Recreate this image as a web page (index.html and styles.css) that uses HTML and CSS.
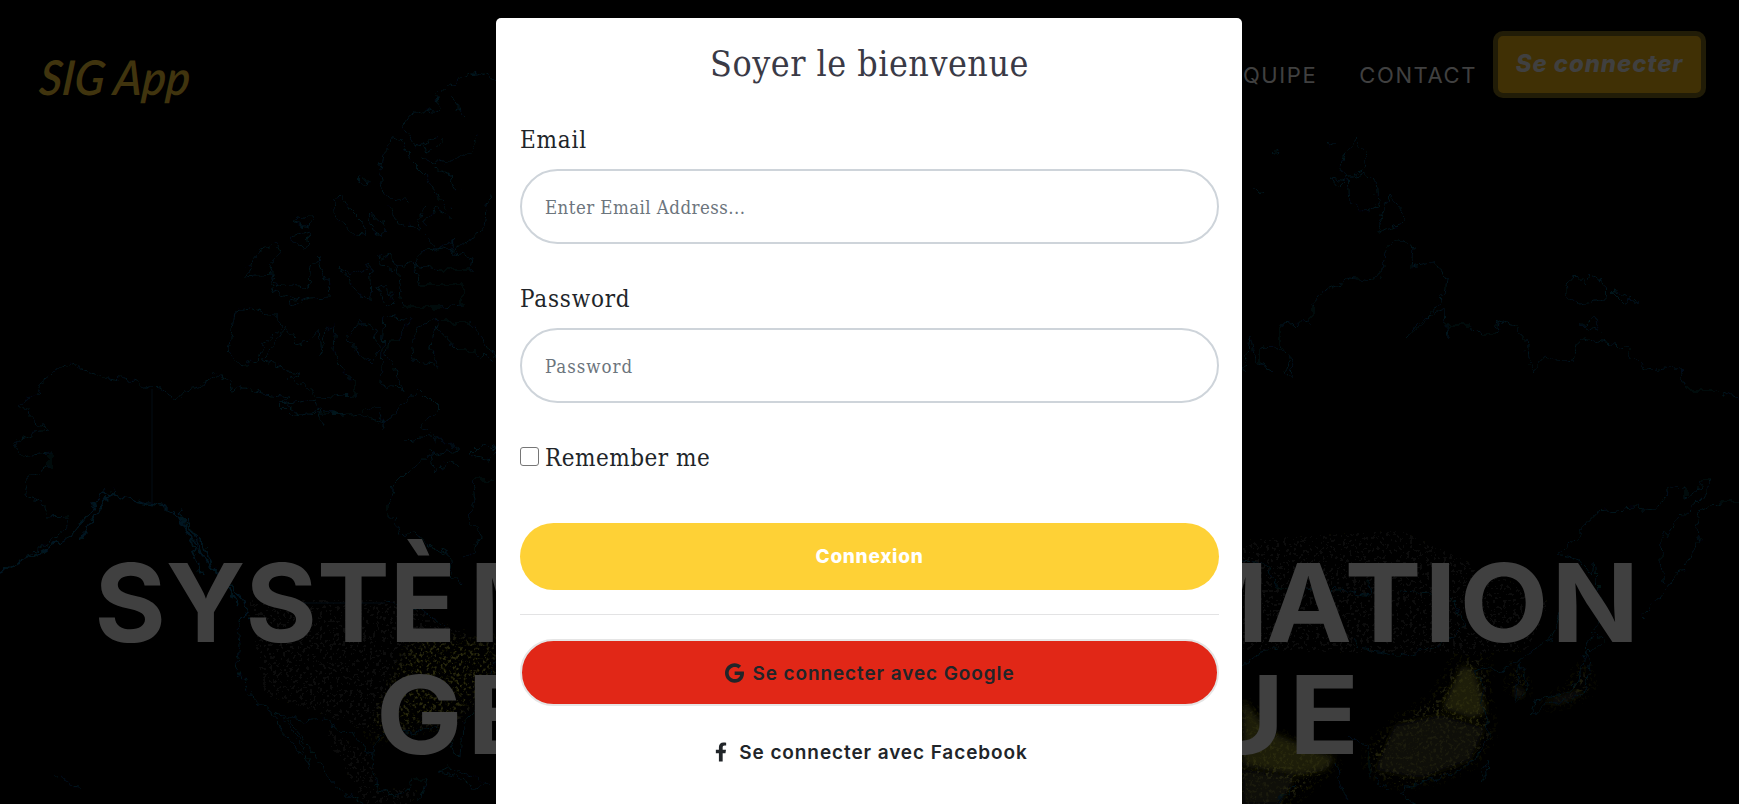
FILE: index.html
```html
<!DOCTYPE html>
<html lang="fr">
<head>
<meta charset="utf-8">
<title>SIG App</title>
<link rel="stylesheet" href="styles.css">
</head>
<body>
<div class="page">
  <svg class="map" viewBox="0 0 1739 804" preserveAspectRatio="xMidYMin slice" aria-hidden="true">
    <defs>
      <filter id="rough" x="0" y="0" width="1739" height="804" filterUnits="userSpaceOnUse">
        <feTurbulence type="fractalNoise" baseFrequency=".12" numOctaves="2" seed="4"/>
        <feDisplacementMap in="SourceGraphic" scale="11" xChannelSelector="R" yChannelSelector="G"/>
      </filter>
      <filter id="lights" x="0" y="0" width="1739" height="804" filterUnits="userSpaceOnUse">
        <feGaussianBlur in="SourceGraphic" stdDeviation="7" result="area"/>
        <feTurbulence type="fractalNoise" baseFrequency=".3" numOctaves="3" seed="9"/>
        <feColorMatrix values="0 0 0 0 1  0 0 0 0 1  0 0 0 0 1  5 0 0 0 -2.6"/>
        <feComposite in="area" operator="in"/>
      </filter>
      <filter id="soft" x="-20%" y="-20%" width="140%" height="140%"><feGaussianBlur stdDeviation="3"/></filter>
    </defs>
    <g filter="url(#lights)">
      <path class="dim" d="M245 600L400 600 497 650 497 680 460 725 375 735 325 715 265 695Z"/>
      <path class="city" d="M415 640L497 640 497 675 455 715 370 740 390 690Z"/>
      <path class="dim" d="M315 720L370 755 380 790 425 785 410 804 365 804Z"/>
      <path class="dim" d="M1243 540L1400 530 1550 600 1530 650 1430 655 1243 650Z"/>
      <path class="city" d="M1243 700L1275 735 1340 765 1315 780 1285 804 1243 804Z"/>
      <path class="city" d="M1455 665L1485 660 1488 720 1490 735 1475 760 1445 775 1400 785 1370 770 1370 750 1400 720 1435 700Z"/>
      <path class="city" d="M1515 660L1528 695 1510 690ZM1584 660L1590 690 1570 700 1535 710 1570 690Z"/>
    </g>
    <g class="haze" filter="url(#soft)">
      <path class="bright" d="M1243 700L1270 732 1335 758 1325 770 1300 775 1243 765Z"/>
      <path class="bright" d="M1462 666L1474 670 1480 690 1486 712 1472 718 1442 708Z"/>
      <path d="M1395 725L1440 715 1485 728 1470 760 1420 778 1375 770Z"/>
      <path d="M1243 770L1295 778 1280 804 1243 804Z"/>
      <path d="M1514 685L1525 690 1522 700 1514 696ZM1540 703L1578 690 1584 694 1560 704Z"/>
    </g>
    <g class="coast">
      <path class="faint" d="M152 389L152 505M300 603L385 603"/>
    </g>
    <g class="coast" filter="url(#rough)">
      <path d="M20 404L38 395 42 382 55 372 72 363 82 369 100 376 120 379 135 382 152 389 162 390 176 400 185 390 200 386 217 375 228 380 232 392 245 387 262 393 290 396 280 405 290 415 320 410 340 415 360 413 385 425 400 405 420 390"/>
      <path d="M20 404L37 423 50 430 35 432 14 443 22 455 50 452 50 467 32 475 24 487 32 498 43 502 46 518 70 517 66 530 40 548 20 562 0 573"/>
      <path class="near" d="M0 573L40 552 70 535 90 512 104 492 125 498 152 505 165 507 178 515 190 530 205 546 212 565 228 583 246 603 248 615 238 622"/>
      <path class="near" d="M175 510L190 540 202 575M185 518L205 560 215 570 240 605M115 490L95 515 80 540M180 508L183 525 198 550 210 565"/>
      <path d="M238 622L240 645 237 665 247 690 258 703 270 708 280 730 293 745 311 768 300 742 285 720 275 712"/>
      <path d="M285 716L300 735 312 752 325 770 333 783 350 796 365 804M275 714L303 720 325 718 342 733 352 732 365 750 373 752M373 752L371 770 380 790 395 795 408 790 412 778 427 778 423 795 415 804M373 752L378 738 395 730 413 733 435 728 447 735 455 755 460 757 461 742 462 725 480 705 496 660"/>
      <path d="M420 390L440 410 420 425 440 440 460 450 430 455 410 470 395 485 387 505 387 517 395 520 399 535 415 533 430 547 450 553 452 573 462 585M496 480L472 480 475 500 470 520 480 535 475 550 463 556M438 440L420 438 405 440M470 455L480 445 496 450 488 460ZM430 450L435 472 450 460 460 467M438 772L450 768 470 775 490 785 475 788 455 775Z"/>
      <path d="M385 603L410 607 430 615 444 628M281 402L300 413 345 415M280 405L315 400 324 425M360 413L378 405 384 428M52 776L58 778M63 778L75 784 80 790"/>
      <path d="M235 311L250 308 262 313 275 315 282 327 265 342 258 360 243 366 228 352ZM244 277L260 250 275 244 280 252 270 267 275 285 300 288 310 285 312 265 318 258 323 277 331 280 330 297 310 298 290 305 289 300 300 298 270 290 275 275ZM293 223L305 214 312 220 310 226ZM290 236L312 232 305 247 295 246ZM333 200L343 198 350 210 362 222 365 236 355 235 345 226 336 215ZM369 212L385 225 382 237 372 230ZM263 360L285 328 297 345 307 342 318 330 320 356 325 330 335 325 333 350 345 373 355 382 355 395 320 398 290 378 300 375Z"/>
      <path d="M346 340L360 322 375 330 379 350 370 362ZM384 315L410 320 400 340 388 340 386 355 395 370 402 390 380 385ZM414 360L412 340 420 325 438 320 430 345 438 365ZM442 322L470 322 480 335 496 360M434 325L458 350 475 350 496 365M377 259L390 255 398 265 392 272ZM337 265L350 275 370 265 372 298 360 296ZM398 265L415 262 420 285 440 285 463 285 463 305 440 307 402 307ZM412 264L425 250 445 248 472 258 470 270 440 270ZM425 235L435 250 455 240 450 250 472 240 485 225 490 195M378 287L388 285 393 302 385 305Z"/>
      <path d="M402 125L410 115 425 110 440 113 435 95 450 85 462 78 480 73 496 80M402 125L415 145 430 150 445 140M402 140L392 137 384 155 380 175 383 195 408 202M402 140L410 160 425 175 430 185 437 195 450 210M415 147L440 135M420 158L445 163 470 152 478 135M435 170L450 175 455 190 462 189M390 207L400 225 418 228 425 205M425 225L435 207 452 218M450 95L465 118M361 176L367 180 366 188 360 183Z"/>
      <path d="M1344 155L1355 140 1366 152 1364 170 1350 176 1338 170ZM1348 178L1362 174 1376 180 1378 205 1368 212 1350 203ZM1376 232L1390 196 1404 212 1405 222 1390 228ZM1332 178L1346 181 1339 188ZM1383 268L1388 248 1400 240 1414 248 1412 267 1436 262 1447 280 1445 295 1432 312 1405 340 1420 320 1445 308 1447 340 1448 325 1470 325 1482 335 1496 335 1500 320 1515 325 1525 340 1527 358 1536 372 1544 355 1555 362 1573 360 1579 342 1585 338 1602 342 1625 347 1635 362 1648 370 1665 367 1680 370 1685 390 1715 390 1739 400"/>
      <path d="M1383 268L1375 280 1350 277 1340 285 1325 290 1312 305 1312 322 1280 325 1280 345 1293 360 1292 380 1285 370 1290 355 1272 345 1260 350 1260 365 1272 370 1255 360 1250 335 1248 355 1243 370M1566 285L1576 274 1586 285 1590 275 1604 285 1605 300 1580 305 1568 298ZM1612 290L1625 295 1637 300 1625 303ZM1581 325L1594 318 1600 330ZM1271 152L1278 150 1276 155ZM1327 143L1335 144 1330 147ZM1256 190L1263 193"/>
      <path d="M1739 502L1720 502 1700 510 1695 525 1700 542 1690 560 1680 572 1665 590 1642 617M1665 585L1661 560 1662 540 1670 527 1700 500 1712 480 1700 480 1698 493 1685 498 1685 485 1668 490 1655 510 1635 508 1597 512 1585 525 1575 540 1557 555 1580 560 1592 575 1595 560 1600 610 1593 630"/>
      <path d="M1243 560L1265 562 1277 588 1302 588 1340 590 1370 596 1368 580M1400 592L1450 595 1458 610 1465 625 1445 642 1425 650 1400 655 1360 648 1355 640M1243 665L1260 652 1275 648M1560 610L1550 640 1537 648 1525 655 1510 665 1500 672 1485 668 1475 672 1485 690 1480 700 1488 720 1489 735 1475 760 1450 775 1430 780 1412 785 1400 795 1415 804"/>
      <path d="M1586 650L1590 670 1587 690 1570 700 1545 705 1530 715 1535 700 1565 695 1578 680ZM1520 660L1528 690 1515 705ZM1586 648L1592 632 1605 642 1590 652ZM1480 780L1487 760 1488 775ZM1335 765L1340 785 1348 800M1350 735L1370 750 1370 775 1390 790M1295 785L1275 804"/>
    </g>
  </svg>
  <header class="nav">
    <a class="brand">SIG App</a>
    <nav class="links">
      <a class="link">ÉQUIPE</a>
      <a class="link">CONTACT</a>
      <button class="connect">Se connecter</button>
    </nav>
  </header>
  <h1 class="headline">
    <span class="line first"><span class="start">SYSTÈ</span><span class="middle">ME D'INFORM</span><span class="end">ATION</span></span>
    <span class="line second">GEOGRAPHIQUE</span>
  </h1>
</div>
<div class="dialog">
  <h2 class="title">Soyer le bienvenue</h2>
  <form class="form">
    <label class="label" for="email">Email</label>
    <input class="field" id="email" type="email" placeholder="Enter Email Address...">
    <label class="label" for="password">Password</label>
    <input class="field password" id="password" type="password" placeholder="Password">
    <label class="remember"><input class="check" type="checkbox"><span>Remember me</span></label>
    <button class="pill submit" type="button">Connexion</button>
    <hr class="rule">
    <button class="pill google" type="button">
      <svg class="g-icon" viewBox="0 0 488 512"><path d="M488 261.8C488 403.3 391.1 504 248 504 110.8 504 0 393.2 0 256S110.8 8 248 8c66.8 0 123 24.500 166.300 64.900l-67.500 64.900C258.500 52.600 94.300 116.600 94.300 256c0 86.500 69.100 156.600 153.700 156.600 98.200 0 135-70.400 140.800-106.900H248v-85.300h236.100c2.300 12.700 3.900 24.900 3.900 41.400z"/></svg>
      <span>Se connecter avec Google</span>
    </button>
    <button class="pill facebook" type="button">
      <svg class="f-icon" viewBox="0 0 320 512"><path d="M279.140 288l14.220-92.660h-88.910v-60.130c0-25.350 12.420-50.060 52.240-50.060h40.420V6.260S260.430 0 225.360 0c-73.220 0-121.080 44.380-121.080 124.720v70.620H22.890V288h81.390v224h100.170V288z"/></svg>
      <span>Se connecter avec Facebook</span>
    </button>
  </form>
</div>
</body>
</html>
```
FILE: styles.css
```css
* { box-sizing: border-box; }
body { margin: 0; background: #000; overflow: hidden; font-family: Inter, sans-serif; }
.page { position: relative; height: 804px; background: #000; overflow: hidden; }
.map { position: absolute; inset: 0; width: 100%; height: 100%; }
.coast path { fill: none; stroke: #03141c; stroke-width: 1; }
.coast .near { stroke: #031620; stroke-width: 1.6; }
.coast .faint { stroke: #020d14; }
.city { fill: #2b2b0d; }
.dim { fill: #0f0f09; }
.haze { fill: #19190b; opacity: .7; }
.haze .bright { fill: #2b2b0e; }

.nav { position: relative; height: 129px; padding: 31px 33px 0 40px; display: flex; justify-content: space-between; align-items: flex-start; }
.brand { margin-top: 18px; font: italic 600 48px/56px Lato, sans-serif; color: #40340e; transform: scaleX(.93) skewX(-6deg); transform-origin: left; white-space: nowrap; }
.links { display: flex; align-items: flex-start; }
.link { font-size: 22px; line-height: 28px; letter-spacing: 1.6px; color: #404040; margin: 30px 42px 0 0; }
.link:nth-child(2) { margin-right: 16px; }
.connect { width: 213px; height: 67px; border: 5px solid #211c07; border-radius: 10px; background: #403005; color: #404040; font: italic 800 24px/28px Inter, sans-serif; letter-spacing: .9px; padding: 0 0 2px; white-space: nowrap; }
.headline { position: relative; margin: 417px 0 0; font-size: 109px; line-height: 112px; font-weight: 700; color: #404040; display: flex; flex-direction: column; align-items: center; }
.line { white-space: nowrap; }
.first { display: flex; justify-content: space-between; width: 1550px; padding-right: 2px; }
.start { letter-spacing: 0; }
.middle { letter-spacing: 5.500px; }
.end { letter-spacing: 2.600px; transform: scaleX(1.06); transform-origin: right; }
.second { letter-spacing: 4.300px; transform: scaleX(1.06); }

.dialog { position: absolute; left: 496px; top: 18px; width: 746px; height: 786px; overflow: hidden; padding: 24px 23px 0 24px; border-radius: 5px 5px 0 0; background: #fff; color: #212529; font-family: "DejaVu Serif Condensed", "DejaVu Serif", serif; }
.title { margin: 0 0 34px; font-size: 35.500px; line-height: 44px; font-weight: 400; letter-spacing: .5px; text-align: center; color: #3a3a46; white-space: nowrap; }
.form { display: flex; flex-direction: column; }
.label { font-size: 24px; line-height: 36px; letter-spacing: .8px; padding-top: 2px; margin-bottom: 11px; }
.field { height: 75px; margin: 0 0 35px; padding: 1px 23px 0; border: 2px solid #ced4da; border-radius: 38px; background: #fff; font: 18.500px "DejaVu Serif Condensed", "DejaVu Serif", serif; letter-spacing: .45px; }
.password { letter-spacing: 1px; }
.field::placeholder { color: #6c757d; opacity: 1; }
.remember { display: flex; align-items: center; gap: 6px; height: 36px; font-size: 24px; letter-spacing: .5px; margin-bottom: 49px; white-space: nowrap; }
.remember span { padding-top: 3px; }
.check { appearance: none; width: 19px; height: 19px; margin: 0; border: 1px solid #767676; border-radius: 3px; background: #fff; }
.pill { display: flex; align-items: center; justify-content: center; height: 67px; border: 0; border-radius: 34px; font: 600 19px Inter, sans-serif; letter-spacing: .9px; color: #212529; background: #fff; white-space: nowrap; }
.submit { background: #fed136; color: #fff; font-weight: 800; letter-spacing: .7px; }
.rule { width: 100%; height: 1px; margin: 24px 0; border: 0; background: #e3e3e4; }
.google { background: #e12717; border: 2px solid #e5e5e5; gap: 8px; }
.google span, .facebook span { padding-top: 1px; margin-right: -1px; }
.facebook { margin-top: 12px; gap: 12px; padding-left: 9px; }
.g-icon { width: 19px; height: 20px; fill: currentColor; }
.f-icon { width: 12px; height: 20px; fill: currentColor; }
```
